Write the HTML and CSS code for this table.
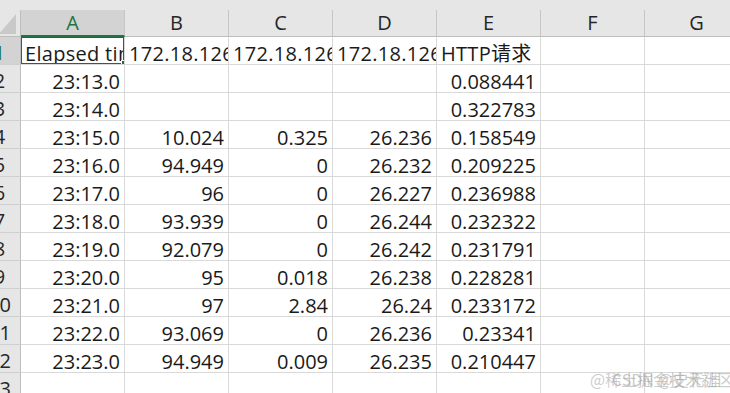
FILE: index.html
```html
<!DOCTYPE html>
<html lang="zh-CN">
<head>
<meta charset="utf-8">
<title>Sheet</title>
<link rel="stylesheet" href="styles.css">
</head>
<body>
<div class="sheet">
  <div class="topstrip"></div>
  <div class="grid">
    <div class="corner"><svg class="tri" width="18" height="20" viewBox="0 0 18 20"><polygon points="17,0 17,20 0,20" fill="#c9c9c9"/></svg></div>
    <div class="ch sel-ch">A</div><div class="ch">B</div><div class="ch">C</div><div class="ch">D</div><div class="ch">E</div><div class="ch">F</div><div class="ch">G</div>

    <div class="rh sel-rh">1</div>
    <div class="c l active">Elapsed time</div><div class="c l">172.18.126.15</div><div class="c l">172.18.126.16</div><div class="c l">172.18.126.17</div><div class="c l">HTTP请求</div><div class="c"></div><div class="c"></div>

    <div class="rh">2</div>
    <div class="c">23:13.0</div><div class="c"></div><div class="c"></div><div class="c"></div><div class="c">0.088441</div><div class="c"></div><div class="c"></div>

    <div class="rh">3</div>
    <div class="c">23:14.0</div><div class="c"></div><div class="c"></div><div class="c"></div><div class="c">0.322783</div><div class="c"></div><div class="c"></div>

    <div class="rh">4</div>
    <div class="c">23:15.0</div><div class="c">10.024</div><div class="c">0.325</div><div class="c">26.236</div><div class="c">0.158549</div><div class="c"></div><div class="c"></div>

    <div class="rh">5</div>
    <div class="c">23:16.0</div><div class="c">94.949</div><div class="c">0</div><div class="c">26.232</div><div class="c">0.209225</div><div class="c"></div><div class="c"></div>

    <div class="rh">6</div>
    <div class="c">23:17.0</div><div class="c">96</div><div class="c">0</div><div class="c">26.227</div><div class="c">0.236988</div><div class="c"></div><div class="c"></div>

    <div class="rh">7</div>
    <div class="c">23:18.0</div><div class="c">93.939</div><div class="c">0</div><div class="c">26.244</div><div class="c">0.232322</div><div class="c"></div><div class="c"></div>

    <div class="rh">8</div>
    <div class="c">23:19.0</div><div class="c">92.079</div><div class="c">0</div><div class="c">26.242</div><div class="c">0.231791</div><div class="c"></div><div class="c"></div>

    <div class="rh">9</div>
    <div class="c">23:20.0</div><div class="c">95</div><div class="c">0.018</div><div class="c">26.238</div><div class="c">0.228281</div><div class="c"></div><div class="c"></div>

    <div class="rh">10</div>
    <div class="c">23:21.0</div><div class="c">97</div><div class="c">2.84</div><div class="c">26.24</div><div class="c">0.233172</div><div class="c"></div><div class="c"></div>

    <div class="rh">11</div>
    <div class="c">23:22.0</div><div class="c">93.069</div><div class="c">0</div><div class="c">26.236</div><div class="c">0.23341</div><div class="c"></div><div class="c"></div>

    <div class="rh">12</div>
    <div class="c">23:23.0</div><div class="c">94.949</div><div class="c">0.009</div><div class="c">26.235</div><div class="c">0.210447</div><div class="c"></div><div class="c"></div>

    <div class="rh">13</div>
    <div class="c"></div><div class="c"></div><div class="c"></div><div class="c"></div><div class="c"></div><div class="c"></div><div class="c"></div>
  </div>
  <div class="watermark"><span class="wm1">@稀土掘金技术社区</span><span class="wm2">CSDN @史无涯</span></div>
</div>
</body>
</html>
```
FILE: styles.css
```css
html, body {
  margin: 0;
  padding: 0;
  background: #ffffff;
  overflow: hidden;
}
body {
  width: 730px;
  height: 393px;
  font-family: "Open Sans", "Noto Sans CJK SC", sans-serif;
  font-size: 20px;
  color: #1a1a1a;
}
.sheet {
  position: relative;
  width: 730px;
  height: 393px;
  overflow: hidden;
}
.topstrip {
  height: 10px;
  background: #e6e6e6;
}
.grid {
  display: grid;
  grid-template-columns: 42px repeat(7, 104px);
  grid-auto-rows: 28px;
  grid-template-rows: 27px;
  margin-left: -21px;
}
.corner {
  background: #e6e6e6;
  border-right: 1px solid #bdbdbd;
  border-bottom: 1px solid #bdbdbd;
  box-sizing: border-box;
  display: flex;
  justify-content: flex-end;
  align-items: flex-end;
  padding: 0 3px 2px 0;
}
.tri { display: block; }
.ch {
  background: #e6e6e6;
  border-right: 1px solid #c6c6c6;
  border-bottom: 1px solid #bdbdbd;
  box-sizing: border-box;
  text-align: center;
  line-height: 20px;
  padding-top: 3px;
  color: #262626;
}
.sel-ch {
  background: #d3d3d3;
  color: #217346;
  border-bottom: 2px solid #217346;
}
.rh {
  background: #e6e6e6;
  border-right: 1px solid #bdbdbd;
  border-bottom: 1px solid #cfcfcf;
  box-sizing: border-box;
  text-align: center;
  line-height: 20px;
  padding-top: 6px;
  color: #262626;
}
.sel-rh {
  background: #d3d3d3;
  color: #217346;
}
.c {
  border-right: 1px solid #d9d9d9;
  border-bottom: 1px solid #d9d9d9;
  box-sizing: border-box;
  text-align: right;
  padding: 7px 4px 0 4px;
  line-height: 20px;
  white-space: nowrap;
  color: #1a1a1a;
}
.c.l {
  text-align: left;
  padding-left: 4px;
  padding-right: 0;
  letter-spacing: 0.3px;
  overflow: hidden;
  text-overflow: clip;
}
.active {
  position: relative;
  overflow: visible;
  clip-path: inset(-2px -6px -6px -2px);
}
.active::before {
  content: "";
  position: absolute;
  left: -1px;
  top: -1px;
  right: -1px;
  bottom: -1px;
  border: 2px solid #1e6b41;
  pointer-events: none;
}
.active::after {
  content: "";
  position: absolute;
  right: -4px;
  bottom: -3px;
  width: 5px;
  height: 5px;
  background: #1e6b41;
  border: 1px solid #ffffff;
}
.watermark {
  position: absolute;
  left: 590px;
  top: 367px;
  width: 140px;
  height: 22px;
  font-size: 16px;
  color: rgba(160, 160, 160, 0.55);
  font-family: "Noto Sans CJK SC", sans-serif;
  white-space: nowrap;
}
.wm1, .wm2 {
  position: absolute;
  top: 0;
}
.wm1 { left: 0; }
.wm2 { left: 22px; }
```
